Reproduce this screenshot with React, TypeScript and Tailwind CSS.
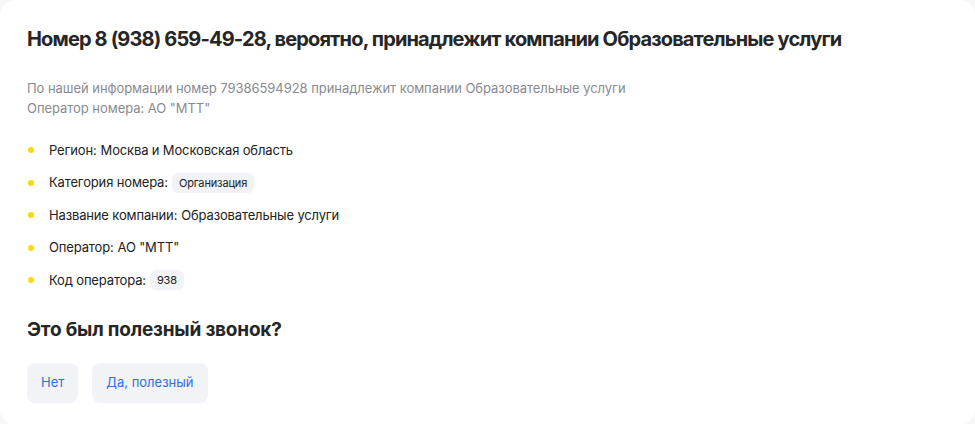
import React from "react";

const items: { label: string; value: string; badge?: boolean }[] = [
  { label: "Регион:", value: "Москва и Московская область" },
  { label: "Категория номера:", value: "Организация", badge: true },
  { label: "Название компании:", value: "Образовательные услуги" },
  { label: "Оператор:", value: 'АО "МТТ"' },
  { label: "Код оператора:", value: "938", badge: true },
];

export default function App() {
  return (
    <div className="min-h-[424px] w-full bg-[#f7f7f8] font-['Inter',sans-serif]">
      <div className="min-h-[424px] rounded-2xl bg-white px-[27px] pt-[26px] pb-[22px]">
        <h1 className="text-[20px] font-bold leading-[26px] tracking-[-0.85px] text-[#262626]">
          Номер 8 (938) 659-49-28, вероятно, принадлежит компании Образовательные услуги
        </h1>

        <p className="mt-[26px] text-[13px] leading-[20px] tracking-[-0.05px] text-[#8a8a8f]">
          По нашей информации номер 79386594928 принадлежит компании Образовательные услуги
          <br />
          Оператор номера: АО "МТТ"
        </p>

        <ul className="mt-[16px] flex flex-col">
          {items.map((item) => (
            <li key={item.label} className="flex h-[32.5px] items-center text-[13px] tracking-[-0.15px] text-[#222]">
              <span className="ml-[1px] mr-[15px] h-[6px] w-[6px] rounded-full bg-[#ffd60a]" />
              <span>{item.label}</span>
              {item.badge ? (
                <span className="ml-[4px] rounded-md bg-[#f1f3f7] px-[7px] py-[3px] text-[11px] leading-[14px] text-[#222]">
                  {item.value}
                </span>
              ) : (
                <span className="ml-[4px]">{item.value}</span>
              )}
            </li>
          ))}
        </ul>

        <h2 className="mt-[21px] text-[19px] font-bold leading-[24px] tracking-[-0.2px] text-[#262626]">
          Это был полезный звонок?
        </h2>

        <div className="mt-[21px] flex gap-[14px]">
          <button className="h-[40px] rounded-lg bg-[#f2f3f7] px-[14px] text-[13px] text-[#2f6fe4]">
            Нет
          </button>
          <button className="h-[40px] rounded-lg bg-[#f2f3f7] px-[14px] text-[13px] text-[#2f6fe4]">
            Да, полезный
          </button>
        </div>
      </div>
    </div>
  );
}
